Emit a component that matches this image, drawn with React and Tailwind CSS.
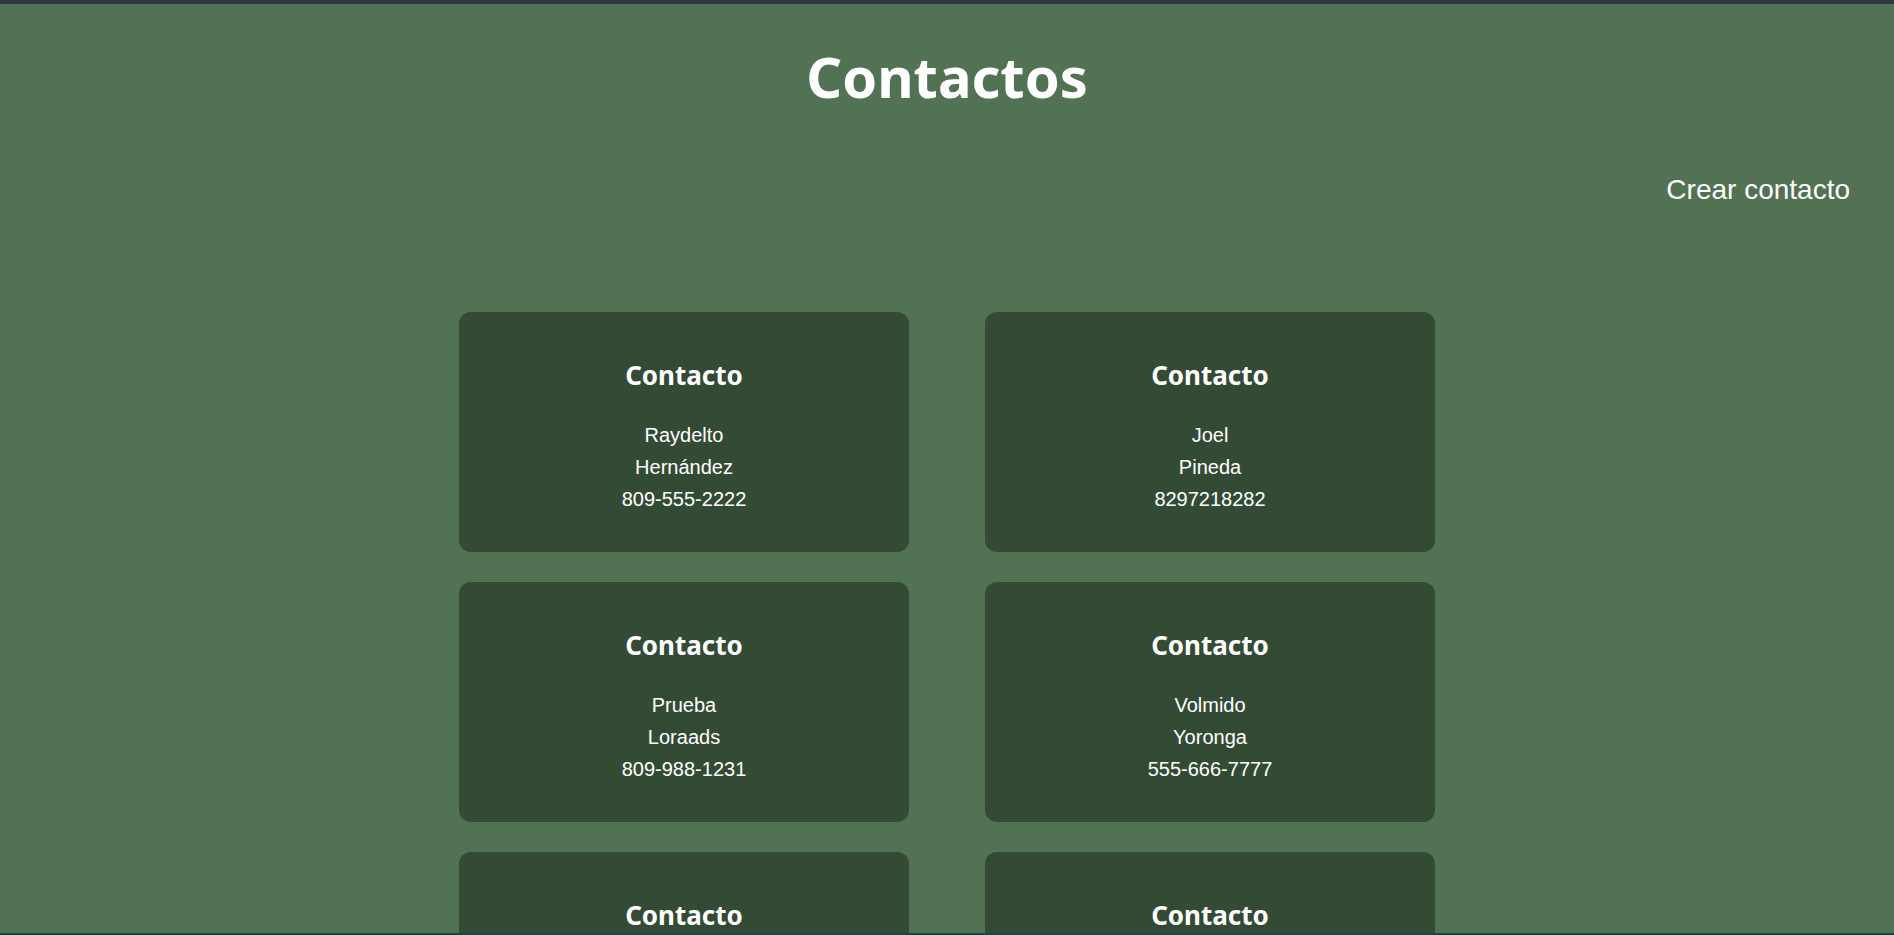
const contacts = [
  { id: 1, name: 'Raydelto', lastName: 'Hernández', phone: '809-555-2222' },
  { id: 2, name: 'Joel', lastName: 'Pineda', phone: '8297218282' },
  { id: 3, name: 'Prueba', lastName: 'Loraads', phone: '809-988-1231' },
  { id: 4, name: 'Volmido', lastName: 'Yoronga', phone: '555-666-7777' },
  { id: 5, name: 'Carlos', lastName: 'Martínez', phone: '809-123-4567' },
  { id: 6, name: 'Ana', lastName: 'Rodríguez', phone: '829-765-4321' },
];

const ContactCard = ({ contact }) => (
  <div className="h-[240px] w-[450px] rounded-[12px] bg-[#334b35] pt-[47px] text-center text-white">
    <h3 className="font-['Noto_Sans',sans-serif] text-[26px] font-bold leading-[32px]">Contacto</h3>
    <div className="mt-[28px] font-['Liberation_Sans',Arial,sans-serif] text-[20px] leading-[32px]">
      <p>{contact.name}</p>
      <p>{contact.lastName}</p>
      <p>{contact.phone}</p>
    </div>
  </div>
);

export default function App() {
  return (
    <div className="min-h-screen bg-[#527254]">
      <div className="h-[4px] bg-[#323645]"></div>

      {/* Header */}
      <h1 className="pt-[32px] text-center font-['Noto_Sans',sans-serif] text-[56px] font-bold leading-[80px] text-white">
        Contactos
      </h1>

      <div className="flex justify-end pr-[44px] pt-[58px]">
        <button className="font-['Liberation_Sans',Arial,sans-serif] text-[28px] leading-[32px] text-white">
          Crear contacto
        </button>
      </div>

      {/* Contact list */}
      <div className="mx-auto mt-[106px] grid w-[976px] grid-cols-2 gap-x-[76px] gap-y-[30px] pb-[30px]">
        {contacts.map((contact) => (
          <ContactCard key={contact.id} contact={contact} />
        ))}
      </div>

      <div className="fixed bottom-0 left-0 h-[2px] w-full bg-[#0f4a48]"></div>
    </div>
  );
}
